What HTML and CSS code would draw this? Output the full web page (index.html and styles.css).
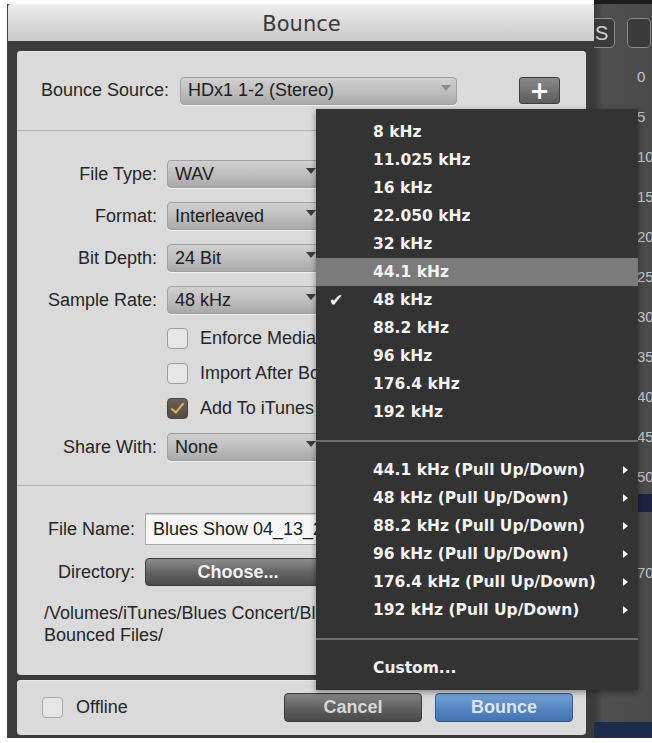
FILE: index.html
```html
<!DOCTYPE html>
<html lang="en">
<head>
  <meta charset="UTF-8">
  <meta name="viewport" content="width=device-width, initial-scale=1.0">
  <title>Bounce</title>
  <link rel="stylesheet" href="styles.css">
</head>
<body>
  <div class="screen">
    <div class="dialog">
      <div class="titlebar">Bounce</div>
      <div class="frame">
        <div class="panel main">
          <section class="source">
            <span class="label">Bounce Source:</span>
            <div class="popup source-popup"><span>HDx1 1-2 (Stereo)</span><i class="arrow light"></i></div>
            <button class="plus">+</button>
          </section>

          <section class="format">
            <div class="row"><span class="label">File Type:</span><div class="popup"><span>WAV</span><i class="arrow"></i></div></div>
            <div class="row"><span class="label">Format:</span><div class="popup"><span>Interleaved</span><i class="arrow"></i></div></div>
            <div class="row"><span class="label">Bit Depth:</span><div class="popup"><span>24 Bit</span><i class="arrow"></i></div></div>
            <div class="row"><span class="label">Sample Rate:</span><div class="popup"><span>48 kHz</span><i class="arrow"></i></div></div>
            <div class="row check-row"><span></span><label class="check"><i class="box"></i><span class="check-text">Enforce Media Composer Compatibility</span></label></div>
            <div class="row check-row"><span></span><label class="check"><i class="box"></i><span class="check-text">Import After Bounce</span></label></div>
            <div class="row check-row"><span></span><label class="check"><i class="box on"></i><span class="check-text">Add To iTunes Library</span></label></div>
            <div class="row"><span class="label">Share With:</span><div class="popup"><span>None</span><i class="arrow"></i></div></div>
          </section>

          <section class="output">
            <div class="row"><span class="label">File Name:</span><div class="field">Blues Show 04_13_2013</div></div>
            <div class="row"><span class="label">Directory:</span><button class="dark-btn">Choose...</button></div>
            <p class="path">/Volumes/iTunes/Blues Concert/Blues Concert<br>Bounced Files/</p>
          </section>
        </div>

        <div class="panel footer">
          <label class="check"><i class="box"></i>Offline</label>
          <div class="buttons">
            <button class="btn cancel">Cancel</button>
            <button class="btn bounce">Bounce</button>
          </div>
        </div>
      </div>
    </div>

    <div class="app">
      <div class="toolbar">
        <span class="tool">S</span>
        <span class="tool"></span>
      </div>
      <div class="ruler">
        <span>0</span><span>5</span><span>10</span><span>15</span><span>20</span><span>25</span>
        <span>30</span><span>35</span><span>40</span><span>45</span><span>50</span>
      </div>
      <div class="clip"></div>
      <div class="ruler lower"><span>70</span></div>
      <div class="clip bottom"></div>
    </div>

    <ul class="menu">
      <li>8 kHz</li>
      <li>11.025 kHz</li>
      <li>16 kHz</li>
      <li>22.050 kHz</li>
      <li>32 kHz</li>
      <li class="hover">44.1 kHz</li>
      <li class="checked">48 kHz</li>
      <li>88.2 kHz</li>
      <li>96 kHz</li>
      <li>176.4 kHz</li>
      <li>192 kHz</li>
      <li class="sep"></li>
      <li class="sub">44.1 kHz (Pull Up/Down)</li>
      <li class="sub">48 kHz (Pull Up/Down)</li>
      <li class="sub">88.2 kHz (Pull Up/Down)</li>
      <li class="sub">96 kHz (Pull Up/Down)</li>
      <li class="sub">176.4 kHz (Pull Up/Down)</li>
      <li class="sub">192 kHz (Pull Up/Down)</li>
      <li class="sep"></li>
      <li>Custom...</li>
    </ul>
  </div>
</body>
</html>
```

FILE: styles.css
```css
body {
  margin: 0;
  background: #fff;
  font-family: "Liberation Sans", Arial, sans-serif;
  overflow: hidden;
}

.screen {
  position: relative;
  display: flex;
  width: 652px;
  height: 743px;
  background: #fff;
}

/* dialog */
.dialog {
  display: flex;
  flex-direction: column;
  width: 587px;
  margin: 4px 0 5px 7px;
  background: #3b3b3b;
}

.titlebar {
  height: 37px;
  line-height: 41px;
  text-align: center;
  font-family: "DejaVu Sans", sans-serif;
  font-size: 21px;
  color: #3a3a3a;
  background: linear-gradient(#eeeeee, #d6d6d6 60%, #cbcbcb);
  border-radius: 3px 3px 0 0;
  margin-left: 1px;
  margin-right: -1px;
}

.frame {
  flex: 1;
  display: flex;
  flex-direction: column;
  gap: 5px;
  padding: 10px 8px 3px 10px;
}

.panel {
  background: #dadada;
  border-radius: 4px;
  box-shadow: inset 0 1px 0 #e6e6e6;
}

.main {
  flex: 1;
  display: flex;
  flex-direction: column;
}

.label {
  font-size: 18px;
  color: #262626;
  text-align: right;
  white-space: nowrap;
}

/* popups */
.popup {
  position: relative;
  display: flex;
  align-items: center;
  height: 28px;
  box-sizing: border-box;
  padding-left: 7px;
  font-size: 18px;
  color: #202020;
  background: linear-gradient(#d0d0d0, #bfbfbf 50%, #a9a9a9);
  border: 1px solid #a0a0a0;
  border-radius: 4px;
  box-shadow: 0 1px 0 rgba(255, 255, 255, 0.6);
  white-space: nowrap;
}

.arrow {
  position: absolute;
  top: 7px;
  right: 6px;
  width: 0;
  height: 0;
  border-left: 5px solid transparent;
  border-right: 5px solid transparent;
  border-top: 6px solid #3c3c3c;
}

.arrow.light {
  border-top-color: #8c8c8c;
  right: 5px;
}

/* bounce source */
.source {
  display: grid;
  grid-template-columns: 139px 277px auto;
  align-items: center;
  height: 79px;
  padding: 0 26px 0 24px;
  border-bottom: 1px solid #b2b2b2;
}

.source .label {
  text-align: left;
}

.plus {
  justify-self: end;
  width: 41px;
  height: 27px;
  padding: 0;
  font-family: "DejaVu Sans", sans-serif;
  font-size: 24px;
  font-weight: bold;
  line-height: 24px;
  color: #fff;
  background: linear-gradient(#8a8a8a, #5c5c5c);
  border: 1px solid #3e3e3e;
  border-radius: 3px;
}

/* format section */
.format {
  display: flex;
  flex-direction: column;
  gap: 14px;
  padding: 29px 0 24px;
  border-bottom: 1px solid #b2b2b2;
}

.row {
  display: grid;
  grid-template-columns: 140px 156px;
  column-gap: 10px;
  align-items: center;
}

.check-row {
  height: 21px;
}

.check {
  display: flex;
  align-items: center;
  gap: 12px;
  font-size: 18px;
  color: #262626;
  white-space: nowrap;
}

.check-text {
  width: 116px;
  overflow: hidden;
}

.box {
  position: relative;
  flex: none;
  width: 21px;
  height: 21px;
  box-sizing: border-box;
  background: #e6e6e6;
  border: 1px solid #9c9c9c;
  border-radius: 4px;
}

.box.on {
  background: linear-gradient(#6a6058, #544a44);
  border-color: #4a4440;
}

.box.on::after {
  content: "";
  position: absolute;
  left: 6px;
  top: 1px;
  width: 5px;
  height: 11px;
  border-right: 2px solid #f2aa48;
  border-bottom: 2px solid #f2aa48;
  transform: rotate(40deg);
}

/* output section */
.output {
  display: flex;
  flex-direction: column;
  gap: 13px;
  padding-top: 27px;
}

.output .row {
  grid-template-columns: 118px 300px;
}

.field {
  height: 32px;
  box-sizing: border-box;
  padding-left: 7px;
  line-height: 30px;
  font-size: 18px;
  color: #202020;
  background: #f6f6f6;
  border: 1px solid #a8a8a8;
  box-shadow: inset 0 1px 1px rgba(0, 0, 0, 0.15);
  white-space: nowrap;
  overflow: hidden;
}

.dark-btn {
  width: 186px;
  height: 28px;
  padding: 0;
  font-family: "Liberation Sans", Arial, sans-serif;
  font-size: 18px;
  font-weight: bold;
  color: #f2f2f2;
  background: linear-gradient(#8c8c8c, #606060 55%, #4c4c4c);
  border: 1px solid #3c3c3c;
  border-radius: 4px;
}

.path {
  width: 272px;
  margin: 3px 0 0 27px;
  font-size: 18px;
  line-height: 22px;
  color: #262626;
  white-space: nowrap;
  overflow: hidden;
}

/* footer */
.footer {
  display: flex;
  align-items: center;
  justify-content: space-between;
  height: 55px;
  padding: 0 13px 0 25px;
}

.footer .check {
  gap: 13px;
}

.footer .box {
  border-color: #a8a8a8;
}

.buttons {
  display: flex;
  gap: 13px;
}

.btn {
  width: 138px;
  height: 29px;
  padding: 0;
  font-family: "Liberation Sans", Arial, sans-serif;
  font-size: 18px;
  font-weight: bold;
  border-radius: 4px;
}

.cancel {
  color: #d8d8d8;
  background: linear-gradient(#848484, #5e5e5e 55%, #4a4a4a);
  border: 1px solid #3a3a3a;
}

.bounce {
  color: #dfe6ee;
  background: linear-gradient(#74a2d6, #5586c2 55%, #4272b0);
  border: 1px solid #33598c;
}

/* application behind the dialog */
.app {
  flex: 1;
  display: flex;
  flex-direction: column;
  height: 738px;
  background: linear-gradient(90deg, #3a3a3a, #4e4e4e 15%, #4a4a4a);
  border-top: 4px solid #1c1c1c;
  box-sizing: border-box;
  overflow: hidden;
}

.toolbar {
  display: flex;
  gap: 12px;
  padding: 14px 0 0 0;
  margin-left: -3px;
  height: 36px;
}

.tool {
  flex: none;
  width: 24px;
  height: 30px;
  box-sizing: border-box;
  padding-left: 3px;
  font-size: 20px;
  line-height: 28px;
  color: #cfcfcf;
  background: #3a3a3a;
  border: 1px solid #8a8a8a;
  border-radius: 5px;
}

.ruler {
  display: flex;
  flex-direction: column;
  padding: 14px 0 0 43px;
  font-size: 15px;
  color: #c4c4c4;
}

.ruler span {
  height: 40px;
  white-space: nowrap;
}

.clip {
  height: 18px;
  margin-top: -14px;
  background: #1c2440;
}

.ruler.lower {
  padding-top: 52px;
}

.clip.bottom {
  margin-top: auto;
  height: 16px;
  background: #1e2a4a;
}

/* sample rate menu */
.menu {
  position: absolute;
  left: 316px;
  top: 109px;
  width: 322px;
  height: 581px;
  box-sizing: border-box;
  margin: 0;
  padding: 9px 0 0;
  list-style: none;
  background: #333333;
  box-shadow: 0 2px 6px rgba(0, 0, 0, 0.4);
  font-family: "DejaVu Sans", sans-serif;
  font-size: 15.5px;
  font-weight: bold;
  color: #f2f2f2;
}

.menu li {
  position: relative;
  height: 28px;
  line-height: 28px;
  padding-left: 57px;
  white-space: nowrap;
}

.menu .hover {
  background: #7b7b7b;
}

.menu .checked::before {
  content: "\2714";
  position: absolute;
  left: 13px;
  font-size: 17px;
}

.menu .sub::after {
  content: "";
  position: absolute;
  left: 307px;
  top: 10px;
  border-left: 5px solid #f2f2f2;
  border-top: 4px solid transparent;
  border-bottom: 4px solid transparent;
}

.menu .sep {
  height: 2px;
  margin: 14px 0;
  padding: 0;
  background: #6e6e6e;
}
```
